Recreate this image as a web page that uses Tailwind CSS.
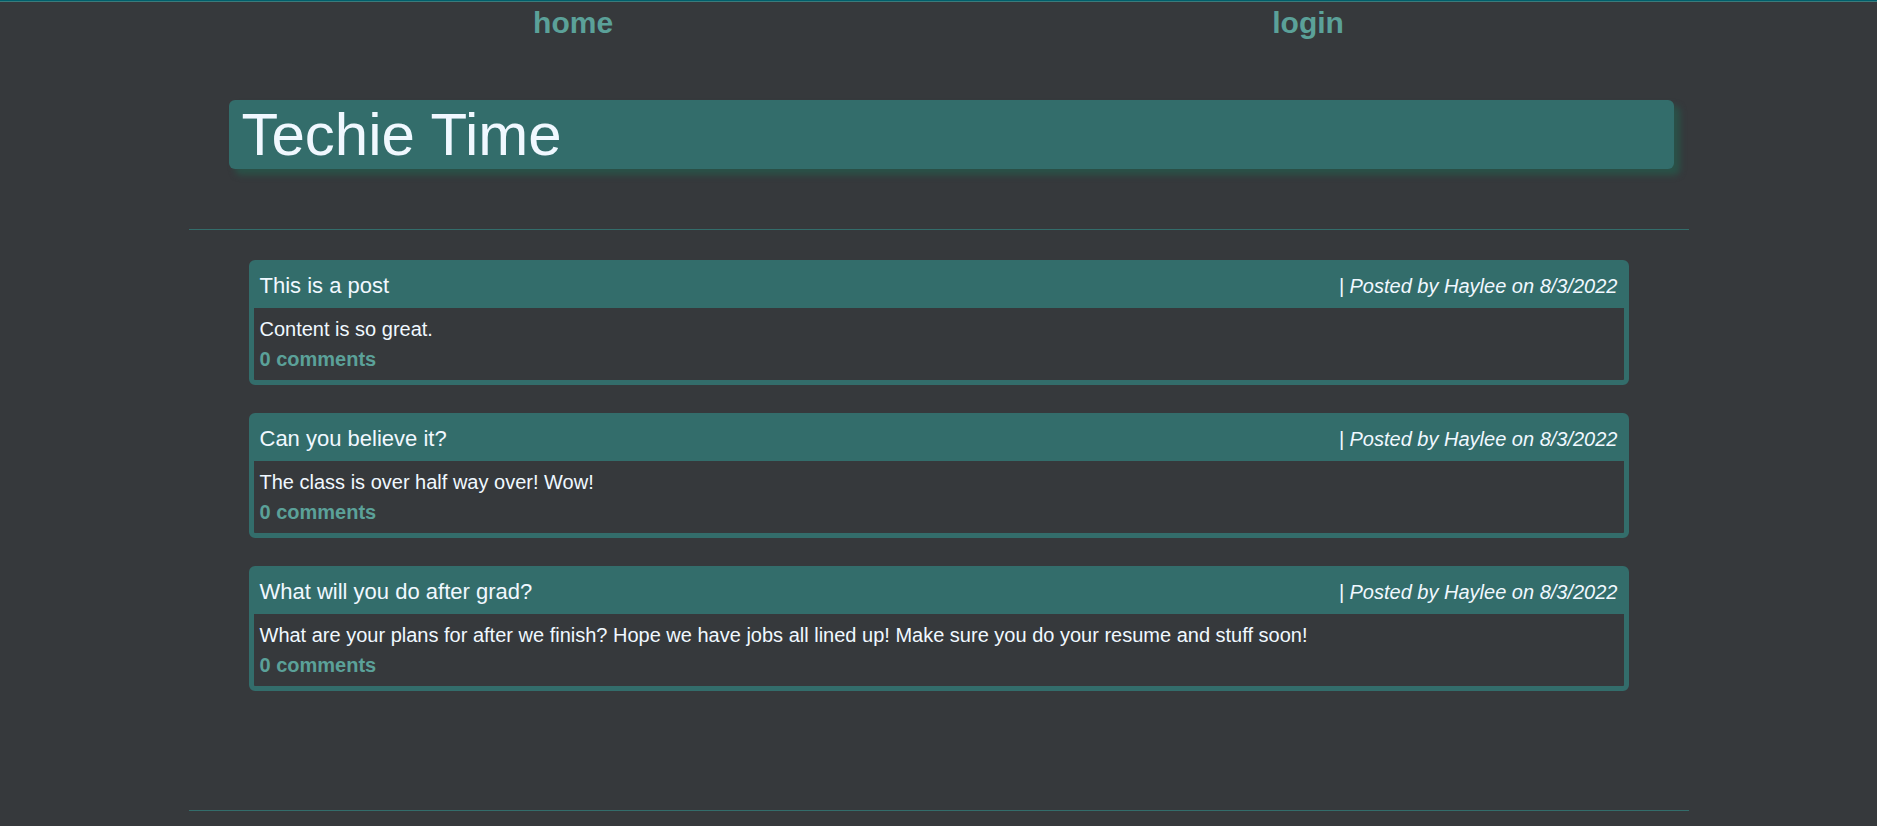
<!DOCTYPE html>
<html lang="en">
<head>
<meta charset="utf-8">
<meta name="viewport" content="width=device-width, initial-scale=1">
<title>Techie Time</title>
<script src="https://cdn.jsdelivr.net/npm/@tailwindcss/browser@4"></script>
</head>
<body class="flex min-h-screen flex-col border-t border-[#005f6b] bg-[#36393c] font-['Liberation_Sans',Arial,sans-serif] text-xl leading-[30px] text-[#f0f8ff]">
<div class="border-t border-[#3b7b7b]"></div>
<div class="mx-auto w-full max-w-[1500px]">
  <nav class="flex justify-around px-[15px] text-3xl leading-[42px] font-bold text-[#5ba199]">
    <a href="#home">home</a>
    <a href="#login">login</a>
  </nav>
  <header class="mt-14 mr-[15px] ml-10 rounded-md bg-[#336d6b] px-[13px] shadow-[6px_6px_6px_#2a5248]">
    <h1 class="text-[60px] leading-[69px]">Techie Time</h1>
  </header>
  <main class="mt-[60px] border-y border-[#336d6b] px-[60px] pt-[30px] pb-[119px]">
    <div class="flex flex-col gap-7">
      <article class="rounded-md border-5 border-[#336d6b]">
        <div class="flex items-center justify-between bg-[#336d6b] px-1.5 pt-1.5 pb-[7px]">
          <h2 class="text-[22px]">This is a post</h2>
          <p class="italic">| Posted by Haylee on 8/3/2022</p>
        </div>
        <div class="px-1.5 pt-1.5 pb-1.5">
          <p>Content is so great.</p>
          <a href="#post-1" class="block font-bold text-[#5ba199]">0 comments</a>
        </div>
      </article>
      <article class="rounded-md border-5 border-[#336d6b]">
        <div class="flex items-center justify-between bg-[#336d6b] px-1.5 pt-1.5 pb-[7px]">
          <h2 class="text-[22px]">Can you believe it?</h2>
          <p class="italic">| Posted by Haylee on 8/3/2022</p>
        </div>
        <div class="px-1.5 pt-1.5 pb-1.5">
          <p>The class is over half way over! Wow!</p>
          <a href="#post-2" class="block font-bold text-[#5ba199]">0 comments</a>
        </div>
      </article>
      <article class="rounded-md border-5 border-[#336d6b]">
        <div class="flex items-center justify-between bg-[#336d6b] px-1.5 pt-1.5 pb-[7px]">
          <h2 class="text-[22px]">What will you do after grad?</h2>
          <p class="italic">| Posted by Haylee on 8/3/2022</p>
        </div>
        <div class="px-1.5 pt-1.5 pb-1.5">
          <p>What are your plans for after we finish? Hope we have jobs all lined up! Make sure you do your resume and stuff soon!</p>
          <a href="#post-3" class="block font-bold text-[#5ba199]">0 comments</a>
        </div>
      </article>
    </div>
  </main>
</div>
</body>
</html>
